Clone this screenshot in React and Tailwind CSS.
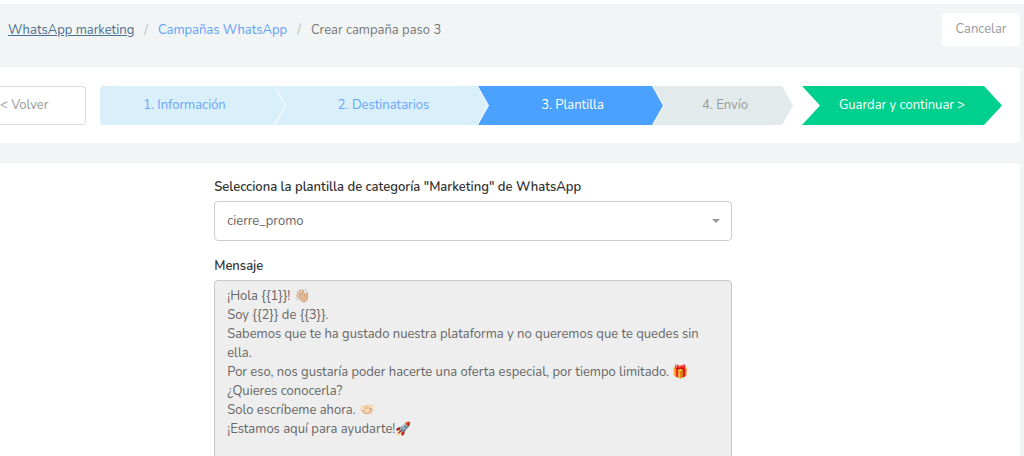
import { useState } from 'react';
import clsx from 'clsx';

const steps = [
  {
    id: 'info',
    label: '1. Información',
    className:
      'flex-[185_1_0px] rounded-l bg-[#d9effa] text-[#6aa5fb] [clip-path:polygon(0_0,calc(100%-11px)_0,100%_50%,calc(100%-11px)_100%,0_100%)]',
  },
  {
    id: 'recipients',
    label: '2. Destinatarios',
    className: 'flex-[213_1_0px] bg-[#d9effa] text-[#6aa5fb]',
  },
  {
    id: 'template',
    label: '3. Plantilla',
    className: 'flex-[185_1_0px] bg-[#4aa1ff] text-white',
  },
  {
    id: 'send',
    label: '4. Envío',
    className: 'flex-[140_1_0px] bg-[#e2eaec] text-[#999999]',
  },
];

const templates = [
  {
    name: 'cierre_promo',
    message: `¡Hola {{1}}! 👋🏼
Soy {{2}} de {{3}}.
Sabemos que te ha gustado nuestra plataforma y no queremos que te quedes sin ella.
Por eso, nos gustaría poder hacerte una oferta especial, por tiempo limitado. 🎁
¿Quieres conocerla?
Solo escríbeme ahora. 🤝🏻
¡Estamos aquí para ayudarte!🚀`,
  },
];

function Header() {
  return (
    <header className="flex items-start justify-between pl-2 pr-1 pt-[9px] h-[63px]">
      <nav aria-label="Ruta" className="flex items-center gap-2.5 h-9">
        <a href="#marketing" className="text-[#4a6f8f] underline">WhatsApp marketing</a>
        <span className="text-[#bbbbbb]">/</span>
        <a href="#campanas" className="text-[#5f9ffc]">Campañas WhatsApp</a>
        <span className="text-[#bbbbbb]">/</span>
        <span className="text-[#777777]">Crear campaña paso 3</span>
      </nav>
      <button type="button" className="w-[78px] h-[33px] rounded bg-white text-[#999999]">
        Cancelar
      </button>
    </header>
  );
}

function StepBar() {
  return (
    <section className="flex items-center bg-white rounded-r pt-[19px] pb-[18px] pr-[18px]">
      <button
        type="button"
        className="w-[86px] h-[39px] text-left border border-l-0 border-[#dddddd] rounded-r text-[#999999]"
      >
        &lt; Volver
      </button>
      <ol className="flex flex-1 h-[39px] ml-[14px]">
        {steps.map((step, i) => (
          <li
            key={step.id}
            className={clsx(
              'flex items-center justify-center',
              i > 0 &&
                '-ml-[10px] [clip-path:polygon(0_0,calc(100%-11px)_0,100%_50%,calc(100%-11px)_100%,0_100%,11px_50%)]',
              step.className
            )}
          >
            <span className={i > 0 ? 'pl-1' : 'pr-4'}>{step.label}</span>
          </li>
        ))}
      </ol>
      <button
        type="button"
        className="w-[200px] h-[39px] ml-[9px] bg-[#00d08e] text-white [clip-path:polygon(0_0,calc(100%-18px)_0,100%_50%,calc(100%-18px)_100%,0_100%,18px_50%)]"
      >
        Guardar y continuar &gt;
      </button>
    </section>
  );
}

function TemplateForm() {
  const [selected, setSelected] = useState(templates[0].name);
  const template = templates.find((t) => t.name === selected);

  return (
    <form className="bg-white rounded-r pt-[13px]">
      <div className="ml-[21%] w-full max-w-[518px]">
        <label htmlFor="template" className="block mb-[3px] leading-[22px] font-semibold text-[#333333]">
          Selecciona la plantilla de categoría "Marketing" de WhatsApp
        </label>
        <div className="relative">
          <select
            id="template"
            value={selected}
            onChange={(e) => setSelected(e.target.value)}
            className="block w-full h-10 pt-0.5 pl-3 pr-8 appearance-none border border-[#cccccc] rounded bg-white text-[#666666]"
          >
            {templates.map((t) => (
              <option key={t.name}>{t.name}</option>
            ))}
          </select>
          <svg viewBox="0 0 8 4" className="absolute right-3 top-[18px] w-2 h-1 pointer-events-none" aria-hidden="true">
            <path d="M0 0h8L4 4z" fill="#999999" />
          </svg>
        </div>
        <label htmlFor="message" className="block mt-[14px] mb-[3px] leading-[22px] font-semibold text-[#333333]">
          Mensaje
        </label>
        <textarea
          id="message"
          readOnly
          rows={9}
          value={template.message}
          className="block w-full px-3 py-1.5 leading-[19px] resize-none border border-[#c8c8c8] rounded bg-[#eeeeee] text-[#666666]"
        />
      </div>
    </form>
  );
}

export default function App() {
  return (
    <div className="min-h-screen border-t-4 border-white bg-[#f1f5f6] font-['Nunito','Open_Sans',sans-serif] text-[13px]">
      <Header />
      <main className="flex flex-col gap-5 pr-1">
        <StepBar />
        <TemplateForm />
      </main>
    </div>
  );
}
